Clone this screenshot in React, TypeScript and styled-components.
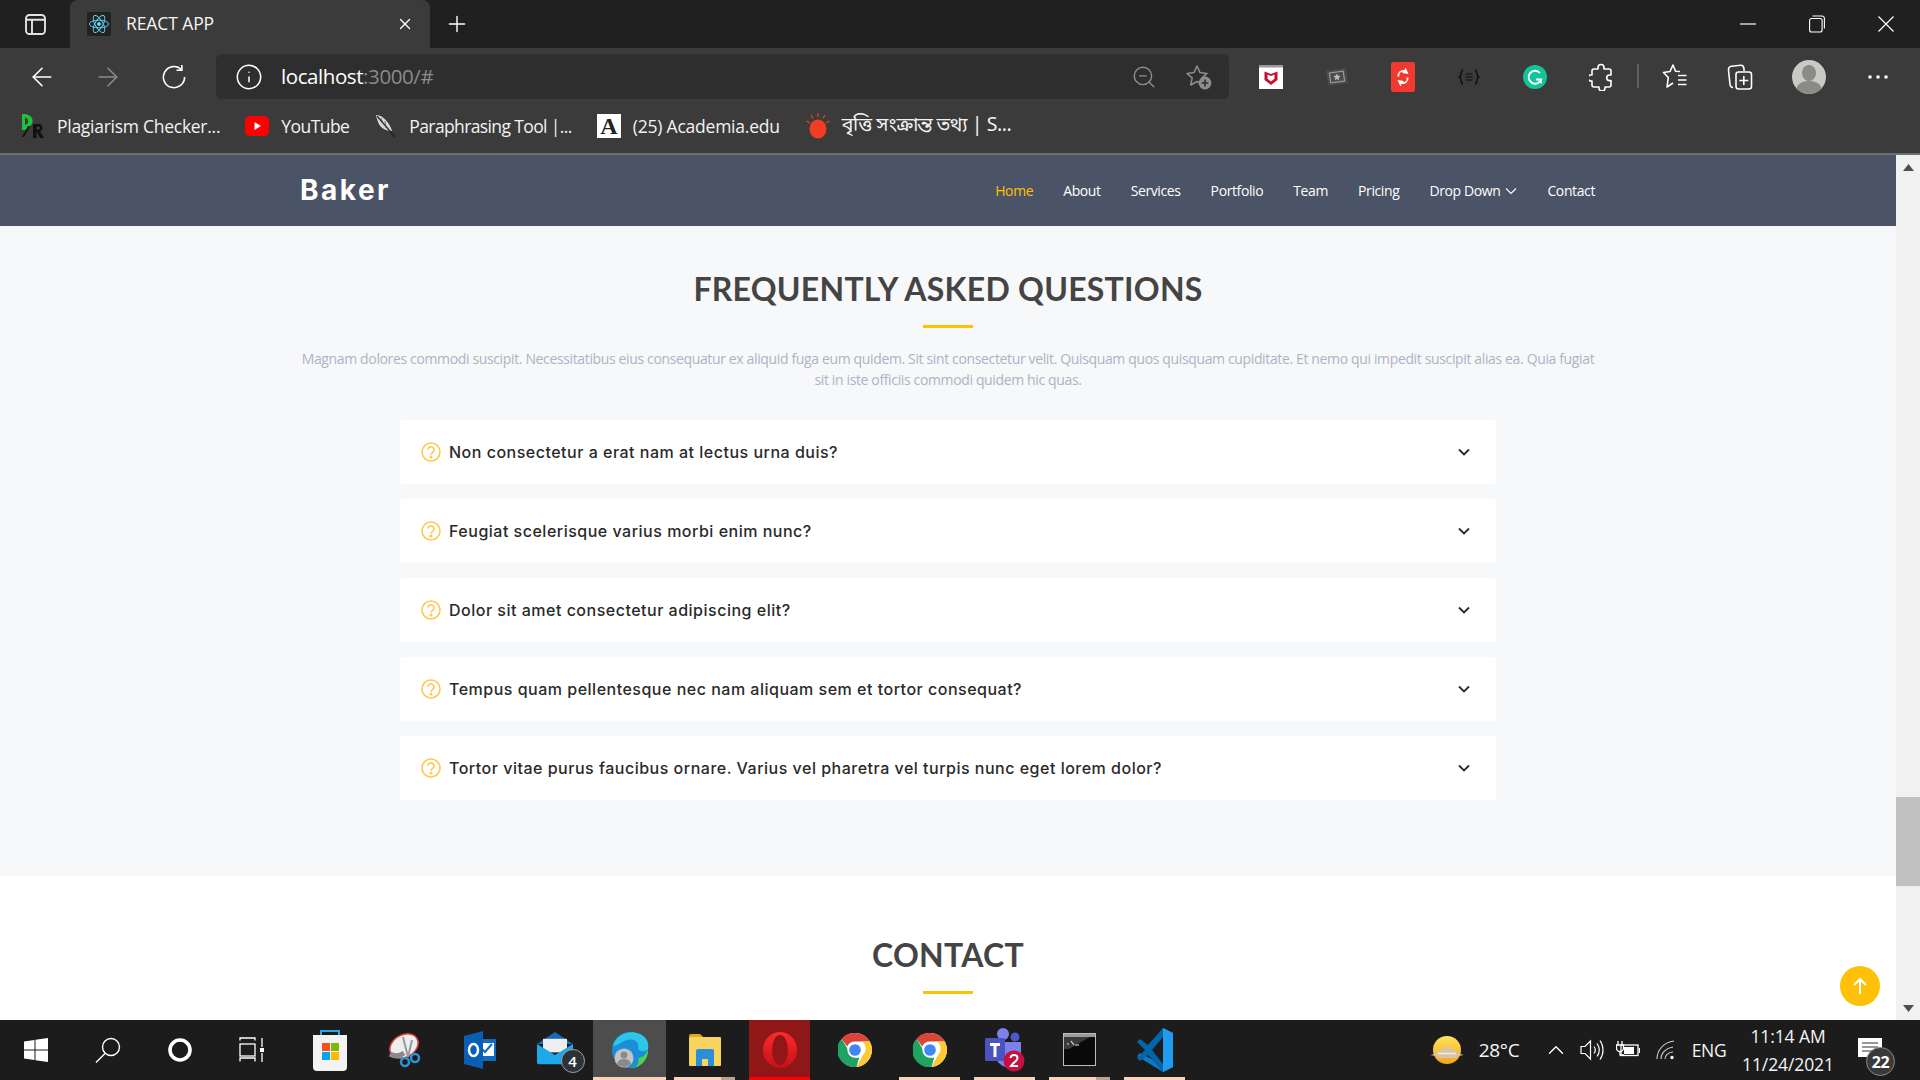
import React from 'react';
import styled, { createGlobalStyle } from 'styled-components';
import { ArrowLeft, ArrowRight, Info, ZoomOut, X, Plus, ChevronUp } from 'lucide-react';

const Global = createGlobalStyle`
  html, body { margin: 0; padding: 0; width: 100%; height: 100%; overflow: hidden; background: #fff; }
  * { box-sizing: border-box; }
`;
const UI = `"Open Sans", "Noto Sans", sans-serif`;

const Shell = styled.div`display:flex;flex-direction:column;width:1920px;height:1080px;overflow:hidden;font-family:${UI};`;

/* browser title bar */
const TitleBar = styled.div`display:flex;align-items:stretch;height:48px;background:#202020;color:#fff;`;
const TabSwitch = styled.div`width:70px;display:flex;align-items:center;justify-content:center;`;
const Tab = styled.div`width:360px;background:#3b3b3b;border-radius:8px 8px 0 0;display:flex;align-items:center;padding:0 16px 0 17px;`;
const Favicon = styled.div`width:24px;height:24px;background:#222;border-radius:2px;display:flex;align-items:center;justify-content:center;`;
const TabTitle = styled.span`margin-left:15px;flex:1;font-size:17.5px;letter-spacing:-.1px;color:#f4f4f4;padding-bottom:2px;`;
const NewTab = styled.div`width:54px;display:flex;align-items:center;justify-content:center;`;
const Grow = styled.div`flex:1;`;
const WinCtl = styled.div`width:69px;display:flex;align-items:center;justify-content:center;`;

/* toolbar */
const Toolbar = styled.div`display:flex;align-items:flex-start;height:54px;padding:6px 0 0 9px;background:#3b3b3b;color:#fff;`;
const ToolCell = styled.div<{ $w?: number }>`width:${p => p.$w ?? 66}px;height:45px;flex:none;display:flex;align-items:center;justify-content:center;`;
const Address = styled.div`width:1013px;height:45px;margin:0 9px;background:#2e2e2e;border-radius:6px;display:flex;align-items:center;padding-left:19px;`;
const Url = styled.div`margin-left:18px;flex:1;font-size:20.5px;letter-spacing:-.42px;color:#fff;padding-bottom:2px;`;
const UrlDim = styled.span`color:#8b8b8b;`;
const AddrAction = styled.div<{ $w: number }>`width:${p => p.$w}px;display:flex;justify-content:center;align-items:center;`;
const ToolSep = styled.div`width:2px;height:24px;background:#5f5f5f;margin:10px 3px 0 3px;`;

/* bookmarks */
const Bookmarks = styled.div`display:flex;align-items:center;height:53px;padding:0 0 3px 21px;background:#3b3b3b;color:#f2f2f2;border-bottom:2px solid #6e6e6e;`;
const Bookmark = styled.div<{ $gap: number; $ls: number }>`display:flex;align-items:center;gap:12px;margin-right:${p => p.$gap}px;font-size:17.5px;line-height:24px;letter-spacing:${p => p.$ls}px;white-space:nowrap;`;
const BookmarkText = styled.span`padding-bottom:1px;`;
const BengaliText = styled.span`font-family:"Noto Sans Bengali","Noto Sans","DejaVu Sans",sans-serif;font-size:19.5px;`;

/* page */
const Viewport = styled.div`flex:1;display:flex;min-height:0;`;
const Page = styled.div`flex:1;position:relative;overflow:hidden;background:#fff;min-width:0;`;
const Header = styled.header`height:71px;background:#4b5366;display:flex;align-items:center;justify-content:space-between;padding:0 300px;`;
const Logo = styled.div`font-family:Inter,sans-serif;font-weight:700;font-size:28px;letter-spacing:2.5px;color:#fff;padding-bottom:1px;`;
const Nav = styled.nav`display:flex;align-items:center;gap:30px;padding-right:1px;`;
const NavLink = styled.a<{ $on?: boolean }>`display:flex;align-items:center;gap:5px;font-size:14px;letter-spacing:-.39px;color:${p => (p.$on ? '#ffc107' : '#fff')};`;
const Section = styled.section<{ $top: number; $bottom: number; $alt?: boolean }>`padding:${p => p.$top}px 0 ${p => p.$bottom}px;background:${p => (p.$alt ? '#f7f8fa' : '#fff')};`;
const Heading = styled.h2`margin:0;text-align:center;font-family:Lato,sans-serif;font-weight:700;font-size:32px;line-height:38px;color:#444;letter-spacing:.25px;`;
const Rule = styled.div`width:50px;height:3px;margin:17px auto 0;background:#ffc107;`;
const Lead = styled.p`width:1296px;margin:20px auto 0;text-align:center;font-size:14px;line-height:21px;letter-spacing:-.36px;color:#aeb3c3;`;
const FaqList = styled.ul`list-style:none;width:1096px;margin:30px auto 0;padding:0;display:flex;flex-direction:column;gap:15px;`;
const FaqItem = styled.li`height:64px;background:#fff;border-radius:4px;display:flex;align-items:center;padding:0 26px 0 21px;`;
const FaqText = styled.span`margin-left:8px;flex:1;font-family:Inter,sans-serif;font-weight:500;font-size:16px;letter-spacing:.5px;color:#2a2a2a;padding-bottom:1px;`;
const ToTop = styled.div`position:absolute;right:16px;bottom:14px;width:40px;height:40px;border-radius:50%;background:#ffc107;display:flex;align-items:center;justify-content:center;`;

/* scrollbar */
const Scrollbar = styled.div`width:24px;flex:none;background:#f1f1f1;display:flex;flex-direction:column;`;
const ScrollArrow = styled.div`height:24px;display:flex;align-items:center;justify-content:center;flex:none;`;
const ScrollTrack = styled.div`flex:1;padding-top:618px;`;
const ScrollThumb = styled.div`height:89px;background:#c1c1c1;`;

/* taskbar */
const Taskbar = styled.div`height:60px;background:#1c1c1c;display:flex;align-items:stretch;color:#fff;`;
const SysCell = styled.div`width:72px;display:flex;align-items:center;justify-content:center;`;
const AppsGroup = styled.div`display:flex;margin-left:4px;`;
const AppCell = styled.div<{ $wide?: boolean }>`width:75px;padding:0 ${p => (p.$wide ? 1 : 7)}px;display:flex;`;
const marks: Record<string, string> = {
  none: 'none',
  one: 'linear-gradient(#fbd2b5,#fbd2b5) bottom/100% 3px no-repeat',
  stack: 'linear-gradient(#b8a292,#b8a292) bottom right/14px 3px no-repeat, linear-gradient(#fbd2b5,#fbd2b5) bottom/100% 3px no-repeat',
  red: 'linear-gradient(#f00,#f00) bottom/100% 3px no-repeat',
};
const AppSlot = styled.div<{ $mark?: string; $bg?: string }>`flex:1;display:flex;align-items:center;justify-content:center;padding-bottom:1px;background:${p => marks[p.$mark ?? 'none']}${p => (p.$bg ? `, ${p.$bg}` : '')};`;
const Tray = styled.div`margin-left:auto;display:flex;align-items:center;height:100%;padding-right:23px;`;
const TrayCell = styled.div<{ $w: number; $ml?: number }>`width:${p => p.$w}px;margin-left:${p => p.$ml ?? 0}px;display:flex;align-items:center;justify-content:center;`;
const TrayText = styled.span<{ $size: number }>`font-size:${p => p.$size}px;letter-spacing:-.3px;color:#f5f5f5;`;
const Clock = styled.div`width:110px;margin-left:1px;display:flex;flex-direction:column;align-items:center;gap:6px;font-size:17.5px;line-height:22px;letter-spacing:-.1px;color:#f5f5f5;`;
const Notify = styled.div`width:54px;height:100%;position:relative;display:flex;align-items:center;justify-content:center;padding-bottom:4px;`;
const NotifyBadge = styled.div`position:absolute;left:23px;top:27px;width:29px;height:29px;border-radius:50%;background:#3a3a3a;border:1px solid #8a8a8a;font-size:16px;font-weight:700;color:#fff;display:flex;align-items:center;justify-content:center;letter-spacing:-.5px;`;
const CountBadge = styled.div`position:absolute;left:24px;top:17px;width:24px;height:24px;border-radius:50%;background:#2c3236;border:1px solid #9aa0a3;font-size:15px;font-weight:600;color:#fff;display:flex;align-items:center;justify-content:center;`;
const Stacked = styled.div`position:relative;width:36px;height:36px;`;

/* drawings */
const ReactLogo = () => (
  <svg width="22" height="22" viewBox="-12 -12 24 24" fill="none" stroke="#61dafb" strokeWidth="1">
    <circle r="2.1" fill="#61dafb" stroke="none" />
    <ellipse rx="10.5" ry="4.2" />
    <ellipse rx="10.5" ry="4.2" transform="rotate(60)" />
    <ellipse rx="10.5" ry="4.2" transform="rotate(120)" />
  </svg>
);
const TabsIcon = () => (
  <svg width="21" height="21" viewBox="0 0 21 21" fill="none" stroke="#e2e2e2" strokeWidth="1.900">
    <rect x="1" y="1" width="19" height="19" rx="3.500" />
    <path d="M1 5.800h19M7 5.800V20" />
  </svg>
);
const MinIcon = () => <svg width="16" height="16" viewBox="0 0 16 16"><path d="M0 8h16" stroke="#fff" strokeWidth="1.2" /></svg>;
const RestoreIcon = () => (
  <svg width="16" height="18" viewBox="0 0 16 18" fill="none" stroke="#fff" strokeWidth="1.1">
    <rect x=".6" y="3.5" width="12.5" height="13.5" rx="2" />
    <path d="M3.5 1h9.5a2.4 2.4 0 0 1 2.4 2.4v10" />
  </svg>
);
const CloseIcon = () => <svg width="16" height="16" viewBox="0 0 16 16"><path d="M.5.5l15 15M15.5.5l-15 15" stroke="#fff" strokeWidth="1.2" /></svg>;
const RefreshIcon = () => (
  <svg width="26" height="26" viewBox="0 0 26 26" fill="none" stroke="#fff" strokeWidth="1.6">
    <path d="M20.5 5.6A10.6 10.6 0 1 0 23.6 13" />
    <path d="M20.9 1v5.3h-5.4" />
  </svg>
);
const StarAdd = () => (
  <svg width="28" height="28" viewBox="0 0 28 28" fill="none">
    <path d="M12 3l3 6.6 7 .8-5.2 4.7 1.5 7-6.3-3.6L5.7 22l1.5-7L2 10.4l7-.8z" stroke="#8d8d8d" strokeWidth="1.5" strokeLinejoin="round" />
    <circle cx="20" cy="20" r="6.4" fill="#8d8d8d" />
    <path d="M20 16.6v6.8M16.6 20h6.8" stroke="#2e2e2e" strokeWidth="1.6" />
  </svg>
);
const McAfee = () => (
  <svg width="24" height="24" viewBox="0 0 24 24">
    <rect width="24" height="24" fill="#fff" />
    <rect width="24" height="2.5" fill="#9a9a9a" />
    <path d="M5.5 6.5L12 9l6.500-2.500v8.500L12 20l-6.500-5z" fill="#c8102e" />
    <path d="M8.500 9.500L12 11l3.500-1.500v4.300L12 16.500l-3.500-2.700z" fill="#fff" />
  </svg>
);
const StarPic = () => (
  <svg width="24" height="24" viewBox="0 0 24 24" fill="none">
    <rect x="2" y="4.500" width="20" height="15" rx="1" transform="rotate(-8 12 12)" fill="#4b4b4b" />
    <rect x="5" y="7" width="14" height="10" transform="rotate(-8 12 12)" stroke="#9a9a9a" strokeWidth="1.2" />
    <path d="M12 8.500l1.100 2.300 2.500.2-1.900 1.700.6 2.500-2.300-1.300-2.300 1.300.6-2.500-1.900-1.700 2.500-.2z" fill="#bdbdbd" />
  </svg>
);
const SyncRed = () => (
  <svg width="24" height="30" viewBox="0 0 24 30">
    <rect width="24" height="30" rx="2" fill="#f0392f" />
    <path d="M6.500 14.500a6 6 0 0 1 7-6.500l1-2.500 3 6.500-6.500-1 1.200-1.300a3.500 3.500 0 0 0-3.700 4.800z" fill="#fff" />
    <path d="M17.500 15.500a6 6 0 0 1-7 6.500l-1 2.500-3-6.500 6.500 1-1.200 1.300a3.500 3.500 0 0 0 3.700-4.800z" fill="#fff" />
  </svg>
);
const JsonIcon = () => (
  <svg width="22" height="16" viewBox="0 0 22 16" fill="none" stroke="#0d0d0d" strokeWidth="1.500">
    <path d="M5 1C2.500 1 4 7 1.500 8 4 9 2.500 15 5 15M17 1c2.500 0 1 6 3.500 7C18 9 19.500 15 17 15" />
    <path d="M7.500 5h7M7.500 8h7M7.500 11h7" strokeWidth="1.200" />
  </svg>
);
const Grammarly = () => (
  <svg width="24" height="24" viewBox="0 0 24 24" fill="none">
    <circle cx="12" cy="12" r="12" fill="#15c39a" />
    <path d="M17 8a6.500 6.500 0 1 0 1.200 6.500h-5.200" stroke="#fff" strokeWidth="1.900" />
    <path d="M17.800 15l.4 3.500" stroke="#fff" strokeWidth="1.500" />
  </svg>
);
const PuzzleIcon = () => (
  <svg width="24" height="28" viewBox="0 0 24 28" fill="none" stroke="#fff" strokeWidth="1.600" strokeLinejoin="round">
    <path d="M9 6V4.500a3 3 0 0 1 6 0V6h5a2 2 0 0 1 2 2v4h-1.500a2.800 2.800 0 0 0 0 5.600H22V22a2 2 0 0 1-2 2h-4v1a3 3 0 0 1-6 0v-1H5a2 2 0 0 1-2-2v-4H2a3 3 0 0 1 0-6h1V8a2 2 0 0 1 2-2z" />
  </svg>
);
const FavList = () => (
  <svg width="26" height="28" viewBox="0 0 26 28" fill="none" stroke="#fff" strokeWidth="1.600" strokeLinejoin="round">
    <path d="M18 8.500l-4.500-.3L11 2 8 8.500l-6.500 1 4.800 5-1.300 9.500 6-4" />
    <path d="M16 12.500h8.500M16 17h8.500M16 21.500h8.500" />
  </svg>
);
const Collections = () => (
  <svg width="26" height="28" viewBox="0 0 26 28" fill="none" stroke="#fff" strokeWidth="1.600">
    <path d="M6 24.500C4 24.500 3.200 23 3 21.500L1.500 7c-.2-2 .8-3.500 3-3.700l9-1c1.900-.2 3 1 3.300 2.600l.4 3" />
    <rect x="9" y="9" width="15.500" height="17" rx="2.500" />
    <path d="M16.800 13v9M12.300 17.500h9" />
  </svg>
);
const Avatar = () => (
  <svg width="34" height="34" viewBox="0 0 34 34">
    <circle cx="17" cy="17" r="17" fill="#c9c9c6" />
    <ellipse cx="17" cy="13" rx="7" ry="8" fill="#8b8a87" />
    <path d="M4.500 28.500C6 23 11 21 17 21s11 2 12.500 7.500A17 17 0 0 1 4.500 28.500z" fill="#8b8a87" />
  </svg>
);
const Dots = () => (
  <svg width="20" height="6" viewBox="0 0 20 6" fill="#fff"><circle cx="2" cy="3" r="1.800" /><circle cx="10" cy="3" r="1.800" /><circle cx="18" cy="3" r="1.800" /></svg>
);
const PrLogo = () => (
  <svg width="24" height="24" viewBox="0 0 24 24">
    <path d="M1 0h3c6 1 9 5 7 10l-6 6H1z" fill="#1fc23c" />
    <path d="M4 3.500c3 .8 4 3.500 2.500 6L4 11z" fill="#3b3b3b" />
    <path d="M1 23l6-11h2L3 23z" fill="#111" />
    <path d="M12 10h6c4 0 5 6 1 7l4 7h-4l-3.500-6.500V24H12zm3.500 2.500v3H18c1.500 0 1.500-3 0-3z" fill="#111" />
  </svg>
);
const YouTube = () => (
  <svg width="24" height="20" viewBox="0 0 24 20">
    <rect width="24" height="20" rx="5" fill="#f00" />
    <path d="M9.500 6l6.500 4-6.500 4z" fill="#fff" />
  </svg>
);
const Feather = () => (
  <svg width="22" height="24" viewBox="0 0 22 24">
    <path d="M1 1c5 0 11 4 15 13l1 3c-6 0-12-3-14-9C2.500 6 1 3 1 1z" fill="#d8d8d8" />
    <path d="M2 2l18 21" stroke="#222" strokeWidth="1.200" />
    <path d="M6 4l3 7M10 7l1 7" stroke="#555" strokeWidth=".8" />
  </svg>
);
const AcademiaBox = styled.div`width:24px;height:24px;background:#fff;color:#222;font-family:"Liberation Serif",serif;font-weight:700;font-size:24px;line-height:24px;text-align:center;`;
const SunBulb = () => (
  <svg width="24" height="26" viewBox="0 0 24 26">
    <ellipse cx="12" cy="16" rx="8.500" ry="9.500" fill="#f23d22" />
    <path d="M12 0v4M5 2l2 3.500M19 2l-2 3.500M.5 8L4 10M23.500 8L20 10" stroke="#f23d22" strokeWidth="1.200" />
  </svg>
);

const QuestionRing = () => (
  <svg width="20" height="20" viewBox="0 0 20 20" fill="none" stroke="#ffc850" strokeWidth="1.600">
    <circle cx="10" cy="10" r="9" />
    <path d="M7 7.800a3 3 0 1 1 4.700 2.500c-1 .7-1.700 1.200-1.700 2.500" />
    <circle cx="10" cy="15" r=".7" fill="#ffc850" />
  </svg>
);
const FaqChevron = () => (
  <svg width="12" height="8" viewBox="0 0 12 8" fill="none"><path d="M1 1.500l5 5 5-5" stroke="#2b2b2b" strokeWidth="1.900" /></svg>
);
const NavChevron = () => (
  <svg width="12" height="8" viewBox="0 0 12 8" fill="none"><path d="M1 1.500l5 5 5-5" stroke="#fff" strokeWidth="1.100" /></svg>
);
const Tri = ({ up }: { up?: boolean }) => (
  <svg width="11" height="7" viewBox="0 0 11 7"><path d={up ? 'M5.500 0L11 7H0z' : 'M0 0h11L5.500 7z'} fill="#505050" /></svg>
);
const WinLogo = () => (
  <svg width="24" height="24" viewBox="0 0 24 24" fill="#fff">
    <path d="M0 3.500L10.500 2v9.500H0zM11.500 1.800L24 0v11.500H11.500zM0 12.500h10.500V22L0 20.500zM11.500 12.500H24V24l-12.500-1.800z" />
  </svg>
);
const SearchGlyph = () => (
  <svg width="26" height="26" viewBox="0 0 26 26" fill="none" stroke="#fff" strokeWidth="1.400">
    <circle cx="16" cy="10" r="8.500" />
    <path d="M10 16.500L1 25.500" />
  </svg>
);
const Ring = () => <svg width="26" height="26" viewBox="0 0 26 26" fill="none"><circle cx="13" cy="13" r="10" stroke="#fff" strokeWidth="3.600" /></svg>;
const TaskView = () => (
  <svg width="26" height="26" viewBox="0 0 26 26" fill="none" stroke="#fff" strokeWidth="1.300">
    <path d="M1 3.500V1h15v2.500M1 24.500V21h15v3.500" />
    <rect x="1" y="7" width="15" height="12" />
    <path d="M23 1v9M23 16v9" />
    <rect x="21" y="11" width="4" height="4" fill="#fff" stroke="none" />
  </svg>
);
const Store = () => (
  <svg width="36" height="42" viewBox="0 0 36 42">
    <path d="M9 8V2h18v6" fill="none" stroke="#2ba7e6" strokeWidth="2" />
    <path d="M1 6h34v32a4 4 0 0 1-4 4H5a4 4 0 0 1-4-4z" fill="#f3f3f3" />
    <rect x="10" y="14" width="8" height="8" fill="#f25022" />
    <rect x="19" y="14" width="8" height="8" fill="#7fba00" />
    <rect x="10" y="23" width="8" height="8" fill="#00a4ef" />
    <rect x="19" y="23" width="8" height="8" fill="#ffb900" />
  </svg>
);
const Snip = () => (
  <svg width="34" height="36" viewBox="0 0 34 36" fill="none">
    <ellipse cx="16" cy="14" rx="15" ry="11" transform="rotate(-30 16 14)" fill="#eee" stroke="#e0403a" strokeWidth="1.500" />
    <path d="M2 22c5 3 10 2 14-1" stroke="#888" strokeWidth="5" />
    <path d="M15 5l5 20M24 8l-4 17" stroke="#9a9a9a" strokeWidth="2" />
    <circle cx="17" cy="30" r="4" stroke="#2894d4" strokeWidth="2.500" />
    <circle cx="27" cy="26" r="4" stroke="#2894d4" strokeWidth="2.500" />
  </svg>
);
const Outlook = () => (
  <svg width="32" height="38" viewBox="0 0 32 38">
    <rect x="12" y="8" width="20" height="22" rx="1" fill="#0f6cbd" />
    <path d="M14 12h16v13H14z" fill="#fff" />
    <path d="M17 17l4 4 7-8" stroke="#0f6cbd" strokeWidth="2" fill="none" />
    <path d="M0 5l19-5v38L0 33z" fill="#0a5fb4" />
    <ellipse cx="9.500" cy="19" rx="4.500" ry="6" fill="none" stroke="#fff" strokeWidth="2.500" />
  </svg>
);
const MailIcon = () => (
  <svg width="36" height="34" viewBox="0 0 36 40" preserveAspectRatio="none">
    <path d="M18 0l18 14H0z" fill="#1569b8" />
    <path d="M6 8h24v16H6z" fill="#eee" />
    <path d="M0 14l18 13 18-13v24H2a2 2 0 0 1-2-2z" fill="#1ea8ea" />
  </svg>
);
const EdgeIcon = () => (
  <svg width="38" height="38" viewBox="0 0 38 38" fill="none">
    <circle cx="19" cy="19" r="18" fill="#1a8fd8" />
    <path d="M2 15C5 4 18-2 29 3c7 3 9 9 8 15-3 3-8 3-10 0 2-7-4-11-11-9-6 2-10 6-14 6z" fill="#2bc6e8" />
    <path d="M37 18c1 10-8 20-18 19 8 0 10-6 8-10 3 0 8-2 10-9z" fill="#4fd44a" />
    <circle cx="13" cy="27" r="9.500" fill="#c4c4c4" />
    <circle cx="13" cy="24" r="3.500" fill="#8a8a8a" />
    <path d="M6 33c1-4 4-5 7-5s6 1 7 5a9.500 9.500 0 0 1-14 0z" fill="#8a8a8a" />
  </svg>
);
const Explorer = () => (
  <svg width="32" height="32" viewBox="0 0 32 32">
    <path d="M0 2a2 2 0 0 1 2-2h9l3 3h-14z" fill="#e6a817" />
    <rect y="3" width="32" height="29" rx="1" fill="#f7d560" />
    <path d="M7 32V17a2 2 0 0 1 2-2h14a2 2 0 0 1 2 2v15h-6v-7h-6v7z" fill="#2a8fd8" />
  </svg>
);
const Opera = () => (
  <svg width="36" height="38" viewBox="0 0 36 38">
    <defs><linearGradient id="op" x1="0" y1="0" x2="0" y2="1"><stop offset="0" stopColor="#ff2a2a" /><stop offset="1" stopColor="#c3101c" /></linearGradient></defs>
    <ellipse cx="18" cy="19" rx="17" ry="18" fill="url(#op)" />
    <ellipse cx="18" cy="19" rx="8" ry="15" fill="#8f1717" />
  </svg>
);
const Chrome = () => (
  <svg width="34" height="34" viewBox="0 0 48 48">
    <circle cx="24" cy="24" r="24" fill="#fff" />
    <path d="M24 0a24 24 0 0 1 20.800 12H24a12 12 0 0 0-11 7L5 8A24 24 0 0 1 24 0z" fill="#db4437" />
    <path d="M44.800 12A24 24 0 0 1 26 47.900L36 30a12 12 0 0 0-2-18z" fill="#fcc934" />
    <path d="M5 8l9.600 16.500A12 12 0 0 0 30 34.500L26 47.900A24 24 0 0 1 5 8z" fill="#1ea362" />
    <circle cx="24" cy="24" r="9.500" fill="#4285f4" stroke="#fff" strokeWidth="2.500" />
  </svg>
);
const Teams = () => (
  <svg width="40" height="44" viewBox="0 0 40 44">
    <circle cx="18" cy="6" r="6" fill="#7b83eb" />
    <circle cx="30" cy="9" r="4.500" fill="#5059c9" />
    <path d="M10 14h26v16a10 10 0 0 1-10 10c-8 0-16-6-16-14z" fill="#7b83eb" />
    <rect y="10" width="20" height="23" rx="1.500" fill="#4b53bc" />
    <path d="M5 15h10v3h-3.500v11h-3V18H5z" fill="#fff" />
    <circle cx="29" cy="33" r="10.500" fill="#c4123f" />
    <path d="M25.500 30c.5-4 7-4 7 0 0 3-4 4-6.500 8h7" stroke="#fff" strokeWidth="2" fill="none" />
  </svg>
);
const Cmd = () => (
  <svg width="33" height="33" viewBox="0 0 33 33">
    <rect x=".5" y=".5" width="32" height="32" fill="#0a0a0a" stroke="#bdbdbd" />
    <rect x="1" y="1" width="31" height="3" fill="#9a9a9a" />
    <path d="M1 4h26L6 16H1z" fill="#3a3a3a" />
    <path d="M4 11h2M8 8l3 4M12 12h4" stroke="#ddd" strokeWidth="1.200" />
  </svg>
);
const VsCode = () => (
  <svg width="36" height="44" viewBox="0 0 36 44">
    <path d="M26 0l10 5v34l-10 5L0 28l3-3 23 12z" fill="#0e78c5" />
    <path d="M26 0l10 5v34l-10 5z" fill="#1f9cf0" />
    <path d="M26 0L11 17 3 11l-3 3 8 8-8 8 3 3 8-6 15 17v-8L15 22 26 9z" fill="#0065a9" />
  </svg>
);
const WeatherIcon = () => (
  <svg width="34" height="30" viewBox="0 0 34 30">
    <defs><linearGradient id="sun" x1="0" y1="0" x2="0" y2="1"><stop offset="0" stopColor="#ffe35e" /><stop offset="1" stopColor="#f6a515" /></linearGradient></defs>
    <circle cx="17" cy="15" r="14" fill="url(#sun)" />
    <path d="M0 20c6-.5 6-4 10-4 2-5 11-5 13-1 3 0 4 4 11 5-5 1-7 1-8 3H8c-1-2-3-2-8-3z" fill="#d8c4a8" />
    <path d="M8 18.500h18" stroke="#f5ecdc" strokeWidth="1.500" />
  </svg>
);
const Volume = () => (
  <svg width="24" height="24" viewBox="0 0 24 24" fill="none" stroke="#fff" strokeWidth="1.200">
    <path d="M1 8.500h4L10.500 3v18L5 15.500H1z" />
    <path d="M14 8.500c1.500 2 1.500 5 0 7M17 5.500c2.800 4 2.800 9 0 13M20 2.500c4 5.500 4 13.500 0 19" />
  </svg>
);
const Battery = () => (
  <svg width="24" height="20" viewBox="0 0 24 20" fill="none" stroke="#fff" strokeWidth="1.300">
    <path d="M2 1v4M6 1v4M.5 5h7v3a3.500 3.500 0 0 1-7 0zM4 11v4h4" />
    <rect x="5" y="5" width="17" height="10.500" />
    <rect x="8" y="7" width="10" height="7" fill="#fff" stroke="none" />
    <path d="M23.500 8v5" />
  </svg>
);
const Wifi = () => (
  <svg width="20" height="20" viewBox="0 0 20 20" fill="none" stroke="#cfcfcf" strokeWidth="1.100">
    <path d="M1 19C1 10 8 2 18 1M5 19c0-6 5-11 12-12M9 19c0-3 3-7 8-7" />
    <circle cx="16" cy="17.500" r="1.700" fill="#fff" stroke="none" />
  </svg>
);
const NotifyGlyph = () => (
  <svg width="24" height="20" viewBox="0 0 24 20">
    <rect width="24" height="19" fill="#fff" />
    <path d="M4 5h16M4 9h16M4 13h11" stroke="#333" strokeWidth="1.200" />
  </svg>
);

const faqs = [
  'Non consectetur a erat nam at lectus urna duis?',
  'Feugiat scelerisque varius morbi enim nunc?',
  'Dolor sit amet consectetur adipiscing elit?',
  'Tempus quam pellentesque nec nam aliquam sem et tortor consequat?',
  'Tortor vitae purus faucibus ornare. Varius vel pharetra vel turpis nunc eget lorem dolor?',
];
const links = ['About', 'Services', 'Portfolio', 'Team', 'Pricing'];

export default function App() {
  return (
    <Shell>
      <Global />
      <TitleBar>
        <TabSwitch><TabsIcon /></TabSwitch>
        <Tab>
          <Favicon><ReactLogo /></Favicon>
          <TabTitle>REACT APP</TabTitle>
          <X size={18} strokeWidth={1.8} color="#fff" />
        </Tab>
        <NewTab><Plus size={26} strokeWidth={1.3} color="#fff" /></NewTab>
        <Grow />
        <WinCtl><MinIcon /></WinCtl>
        <WinCtl><RestoreIcon /></WinCtl>
        <WinCtl><CloseIcon /></WinCtl>
      </TitleBar>

      <Toolbar>
        <ToolCell><ArrowLeft size={30} strokeWidth={1.3} color="#fff" /></ToolCell>
        <ToolCell><ArrowRight size={30} strokeWidth={1.3} color="#8a8a8a" /></ToolCell>
        <ToolCell><RefreshIcon /></ToolCell>
        <Address>
          <Info size={28} strokeWidth={1.3} color="#fff" />
          <Url>localhost<UrlDim>:3000/#</UrlDim></Url>
          <AddrAction $w={50}><ZoomOut size={26} strokeWidth={1.3} color="#8d8d8d" /></AddrAction>
          <AddrAction $w={60}><StarAdd /></AddrAction>
        </Address>
        <ToolCell><McAfee /></ToolCell>
        <ToolCell><StarPic /></ToolCell>
        <ToolCell><SyncRed /></ToolCell>
        <ToolCell><JsonIcon /></ToolCell>
        <ToolCell><Grammarly /></ToolCell>
        <ToolCell><PuzzleIcon /></ToolCell>
        <ToolSep />
        <ToolCell><FavList /></ToolCell>
        <ToolCell $w={64}><Collections /></ToolCell>
        <ToolCell $w={74}><Avatar /></ToolCell>
        <ToolCell $w={63}><Dots /></ToolCell>
      </Toolbar>

      <Bookmarks>
        <Bookmark $gap={25} $ls={-.27}><PrLogo /><BookmarkText>Plagiarism Checker...</BookmarkText></Bookmark>
        <Bookmark $gap={26} $ls={-.55}><YouTube /><BookmarkText>YouTube</BookmarkText></Bookmark>
        <Bookmark $gap={25} $ls={-.62}><Feather /><BookmarkText>Paraphrasing Tool |...</BookmarkText></Bookmark>
        <Bookmark $gap={26} $ls={-.22}><AcademiaBox>A</AcademiaBox><BookmarkText>(25) Academia.edu</BookmarkText></Bookmark>
        <Bookmark $gap={0} $ls={-.45}><SunBulb /><BengaliText>বৃত্তি সংক্রান্ত তথ্য | S...</BengaliText></Bookmark>
      </Bookmarks>

      <Viewport>
        <Page>
          <Header>
            <Logo>Baker</Logo>
            <Nav>
              <NavLink $on>Home</NavLink>
              {links.map(l => <NavLink key={l}>{l}</NavLink>)}
              <NavLink>Drop Down <NavChevron /></NavLink>
              <NavLink>Contact</NavLink>
            </Nav>
          </Header>
          <Section $alt $top={44} $bottom={76}>
            <Heading>FREQUENTLY ASKED QUESTIONS</Heading>
            <Rule />
            <Lead>Magnam dolores commodi suscipit. Necessitatibus eius consequatur ex aliquid fuga eum quidem. Sit sint consectetur velit. Quisquam quos quisquam cupiditate. Et nemo qui impedit suscipit alias ea. Quia fugiat sit in iste officiis commodi quidem hic quas.</Lead>
            <FaqList>
              {faqs.map(q => (
                <FaqItem key={q}>
                  <QuestionRing />
                  <FaqText>{q}</FaqText>
                  <FaqChevron />
                </FaqItem>
              ))}
            </FaqList>
          </Section>
          <Section $top={60} $bottom={0}>
            <Heading>CONTACT</Heading>
            <Rule />
          </Section>
          <ToTop><svg width="16" height="18" viewBox="0 0 16 18" fill="none"><path d="M8 17V2M2 8l6-6 6 6" stroke="#fff" strokeWidth="2" /></svg></ToTop>
        </Page>
        <Scrollbar>
          <ScrollArrow><Tri up /></ScrollArrow>
          <ScrollTrack><ScrollThumb /></ScrollTrack>
          <ScrollArrow><Tri /></ScrollArrow>
        </Scrollbar>
      </Viewport>

      <Taskbar>
        <SysCell><WinLogo /></SysCell>
        <SysCell><SearchGlyph /></SysCell>
        <SysCell><Ring /></SysCell>
        <SysCell><TaskView /></SysCell>
        <AppsGroup>
          <AppCell><AppSlot><Store /></AppSlot></AppCell>
          <AppCell><AppSlot><Snip /></AppSlot></AppCell>
          <AppCell><AppSlot><Outlook /></AppSlot></AppCell>
          <AppCell><AppSlot><Stacked><MailIcon /><CountBadge>4</CountBadge></Stacked></AppSlot></AppCell>
          <AppCell $wide><AppSlot $mark="one" $bg="#4d4d4d"><EdgeIcon /></AppSlot></AppCell>
          <AppCell><AppSlot $mark="stack"><Explorer /></AppSlot></AppCell>
          <AppCell><AppSlot $mark="red" $bg="#8f1717"><Opera /></AppSlot></AppCell>
          <AppCell><AppSlot><Chrome /></AppSlot></AppCell>
          <AppCell><AppSlot $mark="one"><Chrome /></AppSlot></AppCell>
          <AppCell><AppSlot $mark="one"><Teams /></AppSlot></AppCell>
          <AppCell><AppSlot $mark="stack"><Cmd /></AppSlot></AppCell>
          <AppCell><AppSlot $mark="one"><VsCode /></AppSlot></AppCell>
        </AppsGroup>
        <Tray>
          <TrayCell $w={42}><WeatherIcon /></TrayCell>
          <TrayCell $w={62}><TrayText $size={19}>28°C</TrayText></TrayCell>
          <TrayCell $w={36} $ml={8}><ChevronUp size={26} strokeWidth={1.3} color="#fff" /></TrayCell>
          <TrayCell $w={36}><Volume /></TrayCell>
          <TrayCell $w={36}><Battery /></TrayCell>
          <TrayCell $w={40}><Wifi /></TrayCell>
          <TrayCell $w={46}><TrayText $size={17.5}>ENG</TrayText></TrayCell>
          <Clock><span>11:14 AM</span><span>11/24/2021</span></Clock>
          <Notify><NotifyGlyph /><NotifyBadge>22</NotifyBadge></Notify>
        </Tray>
      </Taskbar>
    </Shell>
  );
}
